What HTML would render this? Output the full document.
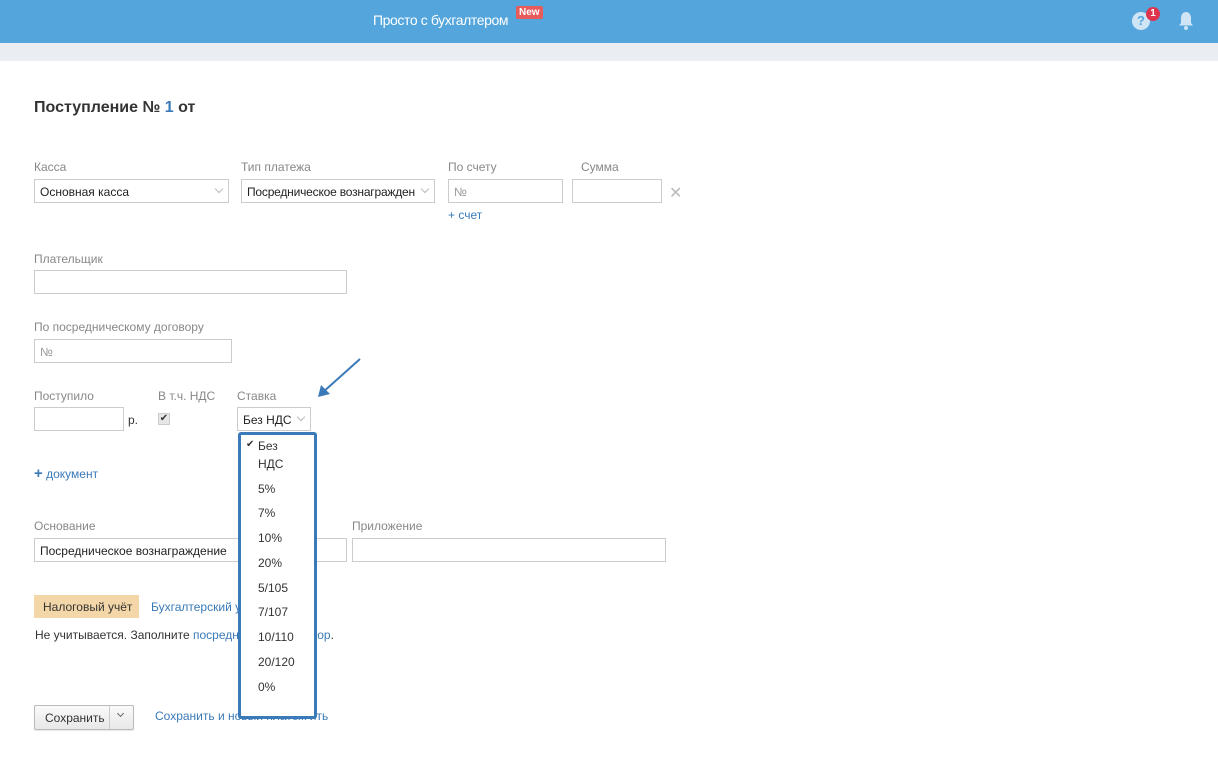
<!DOCTYPE html>
<html><head><meta charset="utf-8"><style>
*{box-sizing:border-box}
body{margin:0;width:1218px;height:760px;overflow:hidden;background:#fff;font-family:"Liberation Sans",sans-serif;font-size:12px;color:#333;position:relative}
.a{position:absolute;white-space:nowrap}
.lbl{color:#888;font-size:12px}
.inp{position:absolute;border:1px solid #ccc;background:#fff;height:24px;font-size:12px;padding:5px 5px;color:#222;white-space:nowrap;overflow:hidden}
.link{color:#3a7ab8}
.chev{position:absolute;right:6px;top:6px;width:6px;height:6px;border-right:1px solid #bbb;border-bottom:1px solid #bbb;transform:rotate(45deg)}
.dd div{position:absolute;left:17px;font-size:12px;color:#333}
</style></head><body>
<div class="a" style="left:0;top:0;width:1218px;height:43px;background:#53a5db"></div>
<div class="a" style="left:0;top:43px;width:1218px;height:18px;background:#eaeef2"></div>
<div class="a" style="left:373px;top:12px;color:#fff;font-size:14px;letter-spacing:-0.4px">Просто с бухгалтером</div>
<div class="a" style="left:516px;top:6px;background:#e85b5b;color:#fff;font-size:10px;font-weight:bold;padding:1px 3px;border-radius:2px">New</div>
<div class="a" style="left:1132px;top:12px;width:18px;height:18px;border-radius:50%;background:#cfe4f5;color:#53a5db;font-weight:bold;font-size:13px;text-align:center;line-height:18px">?</div>
<div class="a" style="left:1146px;top:7px;width:14px;height:14px;border-radius:50%;background:#e0344e;color:#fff;font-size:10px;font-weight:bold;text-align:center;line-height:14px">1</div>
<svg class="a" style="left:1177px;top:11px" width="18" height="20" viewBox="0 0 18 20"><path d="M9 1c-3 0-5 2.5-5 6v5l-2 2.5h14L14 12V7c0-3.5-2-6-5-6z" fill="#cfe4f5"/><circle cx="9" cy="17" r="2" fill="#cfe4f5"/></svg>

<div class="a" style="left:34px;top:99px;font-size:16px;font-weight:bold;color:#333">Поступление № <span style="color:#3a7ab8">1</span> от</div>

<div class="a lbl" style="left:34px;top:160px">Касса</div>
<div class="inp" style="left:34px;top:179px;width:195px">Основная касса<span class="chev"></span></div>
<div class="a lbl" style="left:241px;top:160px">Тип платежа</div>
<div class="inp" style="left:241px;top:179px;width:194px;padding-right:14px;letter-spacing:-0.2px">Посредническое вознагражден<span class="chev"></span></div>
<div class="a lbl" style="left:448px;top:160px">По счету</div>
<div class="inp" style="left:448px;top:179px;width:115px;color:#999">№</div>
<div class="a lbl" style="left:581px;top:160px">Сумма</div>
<div class="inp" style="left:572px;top:179px;width:90px"></div>
<div class="a" style="left:669px;top:183px;color:#bbb;font-size:16px">✕</div>
<div class="a link" style="left:448px;top:208px">+ счет</div>

<div class="a lbl" style="left:34px;top:252px">Плательщик</div>
<div class="inp" style="left:34px;top:270px;width:313px"></div>
<div class="a lbl" style="left:34px;top:320px">По посредническому договору</div>
<div class="inp" style="left:34px;top:339px;width:198px;color:#999">№</div>

<div class="a lbl" style="left:34px;top:389px">Поступило</div>
<div class="inp" style="left:34px;top:407px;width:90px"></div>
<div class="a" style="left:128px;top:413px">р.</div>
<div class="a lbl" style="left:158px;top:389px">В т.ч. НДС</div>
<div class="a" style="left:158px;top:413px;width:12px;height:12px;border:1px solid #ccc;background:#e6e6e6;font-size:10px;line-height:10px;text-align:center;color:#333">✔</div>
<div class="a lbl" style="left:237px;top:389px">Ставка</div>
<div class="inp" style="left:237px;top:407px;width:74px">Без НДС<span class="chev"></span></div>
<svg class="a" style="left:316px;top:357px" width="46" height="42"><path d="M44 2L6 36" stroke="#3a7ab8" stroke-width="2"/><path d="M2 40l3-12 9 9z" fill="#3a7ab8"/></svg>

<div class="a link" style="left:34px;top:465px"><b style="font-size:15px">+</b> документ</div>

<div class="a lbl" style="left:34px;top:519px">Основание</div>
<div class="inp" style="left:34px;top:538px;width:313px">Посредническое вознаграждение</div>
<div class="a lbl" style="left:352px;top:519px">Приложение</div>
<div class="inp" style="left:352px;top:538px;width:314px"></div>

<div class="a" style="left:34px;top:595px;width:105px;height:23px;background:#f4d7a8;padding:5px 0 0 9px;font-size:12px">Налоговый учёт</div>
<div class="a link" style="left:151px;top:600px">Бухгалтерский учёт</div>
<div class="a" style="left:35px;top:628px">Не учитывается. Заполните <span class="link">посреднический договор</span>.</div>

<div class="a" style="left:34px;top:705px;width:100px;height:25px;border:1px solid #bbb;border-radius:2px;background:linear-gradient(#fafafa,#e8e8e8);box-shadow:0 1px 1px rgba(0,0,0,.1)"></div>
<div class="a" style="left:45px;top:711px;font-size:12px">Сохранить</div>
<div class="a" style="left:109px;top:706px;width:1px;height:23px;background:#ccc"></div>
<div class="a" style="left:118px;top:711px;width:5px;height:5px;border-right:1px solid #666;border-bottom:1px solid #666;transform:rotate(45deg)"></div>
<div class="a link" style="left:155px;top:709px">Сохранить и новый платёж&nbsp;ить</div>

<div class="a dd" style="left:238px;top:432px;width:79px;height:287px;background:#fff;border:3px solid #3a7ab8;border-radius:3px">
<div style="left:5px;top:4px;font-size:10px">✔</div>
<div style="top:4px">Без</div>
<div style="top:22px">НДС</div>
<div style="top:47px">5%</div>
<div style="top:71px">7%</div>
<div style="top:96px">10%</div>
<div style="top:121px">20%</div>
<div style="top:146px">5/105</div>
<div style="top:170px">7/107</div>
<div style="top:195px">10/110</div>
<div style="top:220px">20/120</div>
<div style="top:245px">0%</div>
</div>
</body></html>
